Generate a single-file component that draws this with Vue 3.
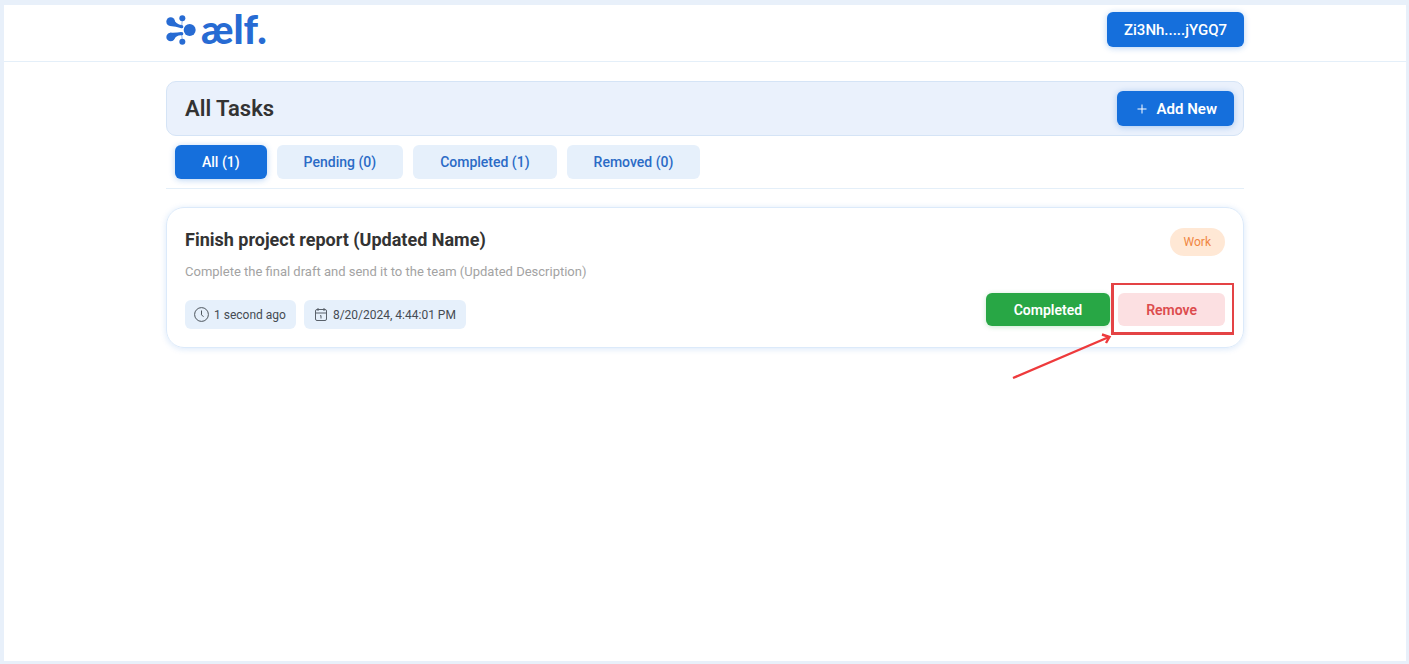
<script setup>
import { ref } from 'vue'

const tabs = [
  { id: 'all', label: 'All', count: 1 },
  { id: 'pending', label: 'Pending', count: 0 },
  { id: 'completed', label: 'Completed', count: 1 },
  { id: 'removed', label: 'Removed', count: 0 },
]
const active = ref('all')

const tasks = [
  {
    id: 1,
    name: 'Finish project report (Updated Name)',
    description: 'Complete the final draft and send it to the team (Updated Description)',
    category: 'Work',
    age: '1 second ago',
    updated: '8/20/2024, 4:44:01 PM',
  },
]
</script>

<template>
  <div class="page">
    <header class="header">
      <div class="container header-row">
        <a class="logo" href="#" aria-label="aelf home">
          <svg class="logo-mark" viewBox="0 0 90 90" aria-hidden="true">
            <g fill="#276bd3">
              <path d="M20 9Q32 30 46 30V40Q30 34 12 33Z" />
              <path d="M20 77Q32 60 46 61V51Q30 54 12 53Z" />
              <circle cx="14" cy="20" r="13" />
              <circle cx="14" cy="66" r="13" />
              <circle cx="49" cy="10" r="9" />
              <circle cx="49" cy="80" r="9" />
              <circle cx="47" cy="35" r="5" />
              <circle cx="47" cy="56" r="5" />
              <circle cx="71" cy="45" r="18" />
            </g>
            <path d="M47 35L49 12M47 56L49 80" stroke="#276bd3" stroke-opacity="0.5" stroke-width="3" />
          </svg>
          <span class="logo-text">ælf.</span>
        </a>
        <button class="btn btn-primary account" type="button">Zi3Nh.....jYGQ7</button>
      </div>
    </header>

    <main class="container">
      <section class="title-bar">
        <h1>All Tasks</h1>
        <button class="btn btn-primary add" type="button">
          <svg width="10" height="10" viewBox="0 0 10 10" aria-hidden="true">
            <path d="M5 0.5V9.5M0.5 5H9.5" stroke="#fff" stroke-width="1" />
          </svg>
          Add New
        </button>
      </section>

      <nav class="tabs" aria-label="Task filters">
        <button
          v-for="tab in tabs"
          :key="tab.id"
          type="button"
          class="btn tab"
          :class="{ selected: active === tab.id }"
          @click="active = tab.id"
        >{{ tab.label }} ({{ tab.count }})</button>
      </nav>

      <article v-for="task in tasks" :key="task.id" class="card">
        <div class="info">
          <h2>{{ task.name }}</h2>
          <p>{{ task.description }}</p>
          <div class="chips">
            <span class="chip">
              <svg width="15" height="15" viewBox="0 0 15 15" fill="none" stroke="#4c545c" aria-hidden="true">
                <circle cx="7.5" cy="7.5" r="6.9" />
                <path d="M7.5 3.5V7.8L9.5 9.8" />
              </svg>
              {{ task.age }}
            </span>
            <span class="chip">
              <svg width="15" height="15" viewBox="0 0 15 15" fill="none" stroke="#59616a" aria-hidden="true">
                <rect x="2.5" y="2.5" width="11" height="11" rx="1.5" />
                <path d="M2.5 6H13.5M5 1V4M11 1V4M7 9L8 8.5V11.5" />
              </svg>
              {{ task.updated }}
            </span>
          </div>
        </div>
        <div class="side">
          <span class="category">{{ task.category }}</span>
          <div class="actions">
            <button class="btn complete" type="button">Completed</button>
            <div class="marked">
              <button class="btn remove" type="button">Remove</button>
              <span class="marker"></span>
              <svg class="arrow" width="102" height="48" viewBox="0 0 102 48" fill="none" stroke="#ee3a3c" stroke-width="2.4" aria-hidden="true">
                <path d="M2 45L98 4M91 1.5L98.5 4L95 10" />
              </svg>
            </div>
          </div>
        </div>
      </article>
    </main>
  </div>
</template>

<style>
body {
  margin: 0;
}
</style>

<style scoped>
.page {
  box-sizing: border-box;
  min-height: 100vh;
  border: solid #e8f0fa;
  border-width: 5px 3px 3px 4px;
  background: #fff;
  color: #333;
  font-family: Roboto, "Liberation Sans", sans-serif;
}
.container {
  max-width: 1078px;
  margin: 0 auto;
}
.header {
  padding: 7px 0 14px;
  border-bottom: 1px solid #e4eff9;
}
.header-row,
.title-bar {
  display: flex;
  align-items: center;
  justify-content: space-between;
}
.logo {
  display: flex;
  align-items: center;
  gap: 5px;
  height: 35px;
  color: #276bd3;
  text-decoration: none;
}
.logo-mark {
  width: 30px;
  height: 30px;
}
.logo-text {
  font: 900 40px/35px Lato, sans-serif;
}
.btn {
  box-sizing: border-box;
  border: 0;
  border-radius: 6px;
  padding: 0 27px;
  height: 34px;
  font: 500 14px/20px Roboto, "Liberation Sans", sans-serif;
  cursor: pointer;
}
.btn-primary,
.tab.selected {
  background: #156fdc;
  color: #fff;
  box-shadow: 0 1px 6px #156fdc50;
}
.btn-primary {
  height: 35px;
  padding: 0 17px;
  font-size: 15px;
}
.title-bar {
  margin-top: 19px;
  padding: 9px 9px 9px 18px;
  border: 1px solid #d5e4f6;
  border-radius: 10px;
  background: #eaf1fc;
}
h1 {
  margin: 0;
  font-size: 22px;
  line-height: 28px;
  font-weight: 600;
}
.add {
  display: flex;
  align-items: center;
  gap: 10px;
  padding-left: 20px;
  font-weight: 600;
}
.tabs {
  display: flex;
  gap: 10px;
  padding: 9px;
  border-bottom: 1px solid #e4eff9;
}
.tab {
  background: #e6f0fb;
  color: #2b6bc6;
}
.card {
  display: flex;
  justify-content: space-between;
  margin-top: 18px;
  padding: 18px;
  border: 1px solid #dceafa;
  border-radius: 18px;
  box-shadow: 0 1px 6px #156fdc28;
}
h2 {
  margin: 0;
  font-size: 18px;
  line-height: 28px;
  font-weight: 700;
}
p {
  margin: 8px 0 18px;
  color: #a3a3a3;
  font-size: 13px;
  line-height: 20px;
}
.chips {
  display: flex;
  gap: 8px;
}
.chip {
  display: flex;
  align-items: center;
  gap: 5px;
  height: 29px;
  padding: 0 10px 0 9px;
  border-radius: 6px;
  background: #e6f0fb;
  color: #454b52;
  font-size: 12px;
}
.side {
  display: flex;
  flex-direction: column;
  align-items: flex-end;
  justify-content: space-between;
  padding: 2px 0 3px;
}
.category {
  padding: 0 14px;
  border-radius: 14px;
  background: #ffe8d5;
  color: #f08642;
  font-size: 12px;
  line-height: 28px;
}
.actions {
  display: flex;
  gap: 8px;
}
.actions .btn {
  display: block;
  height: 33px;
  padding: 0 28px;
  font-weight: 600;
}
.complete {
  background: #28a745;
  color: #fff;
  box-shadow: 0 1px 5px #28a74540;
}
.remove {
  background: #fce0e2;
  color: #dc4c4e;
}
.marked {
  position: relative;
}
.marker {
  position: absolute;
  inset: -10px -9px -9px -7px;
  border: solid #e44345;
  border-width: 2px 2px 3px 3px;
  pointer-events: none;
}
.arrow {
  position: absolute;
  top: 40px;
  right: 112px;
  pointer-events: none;
}
</style>
